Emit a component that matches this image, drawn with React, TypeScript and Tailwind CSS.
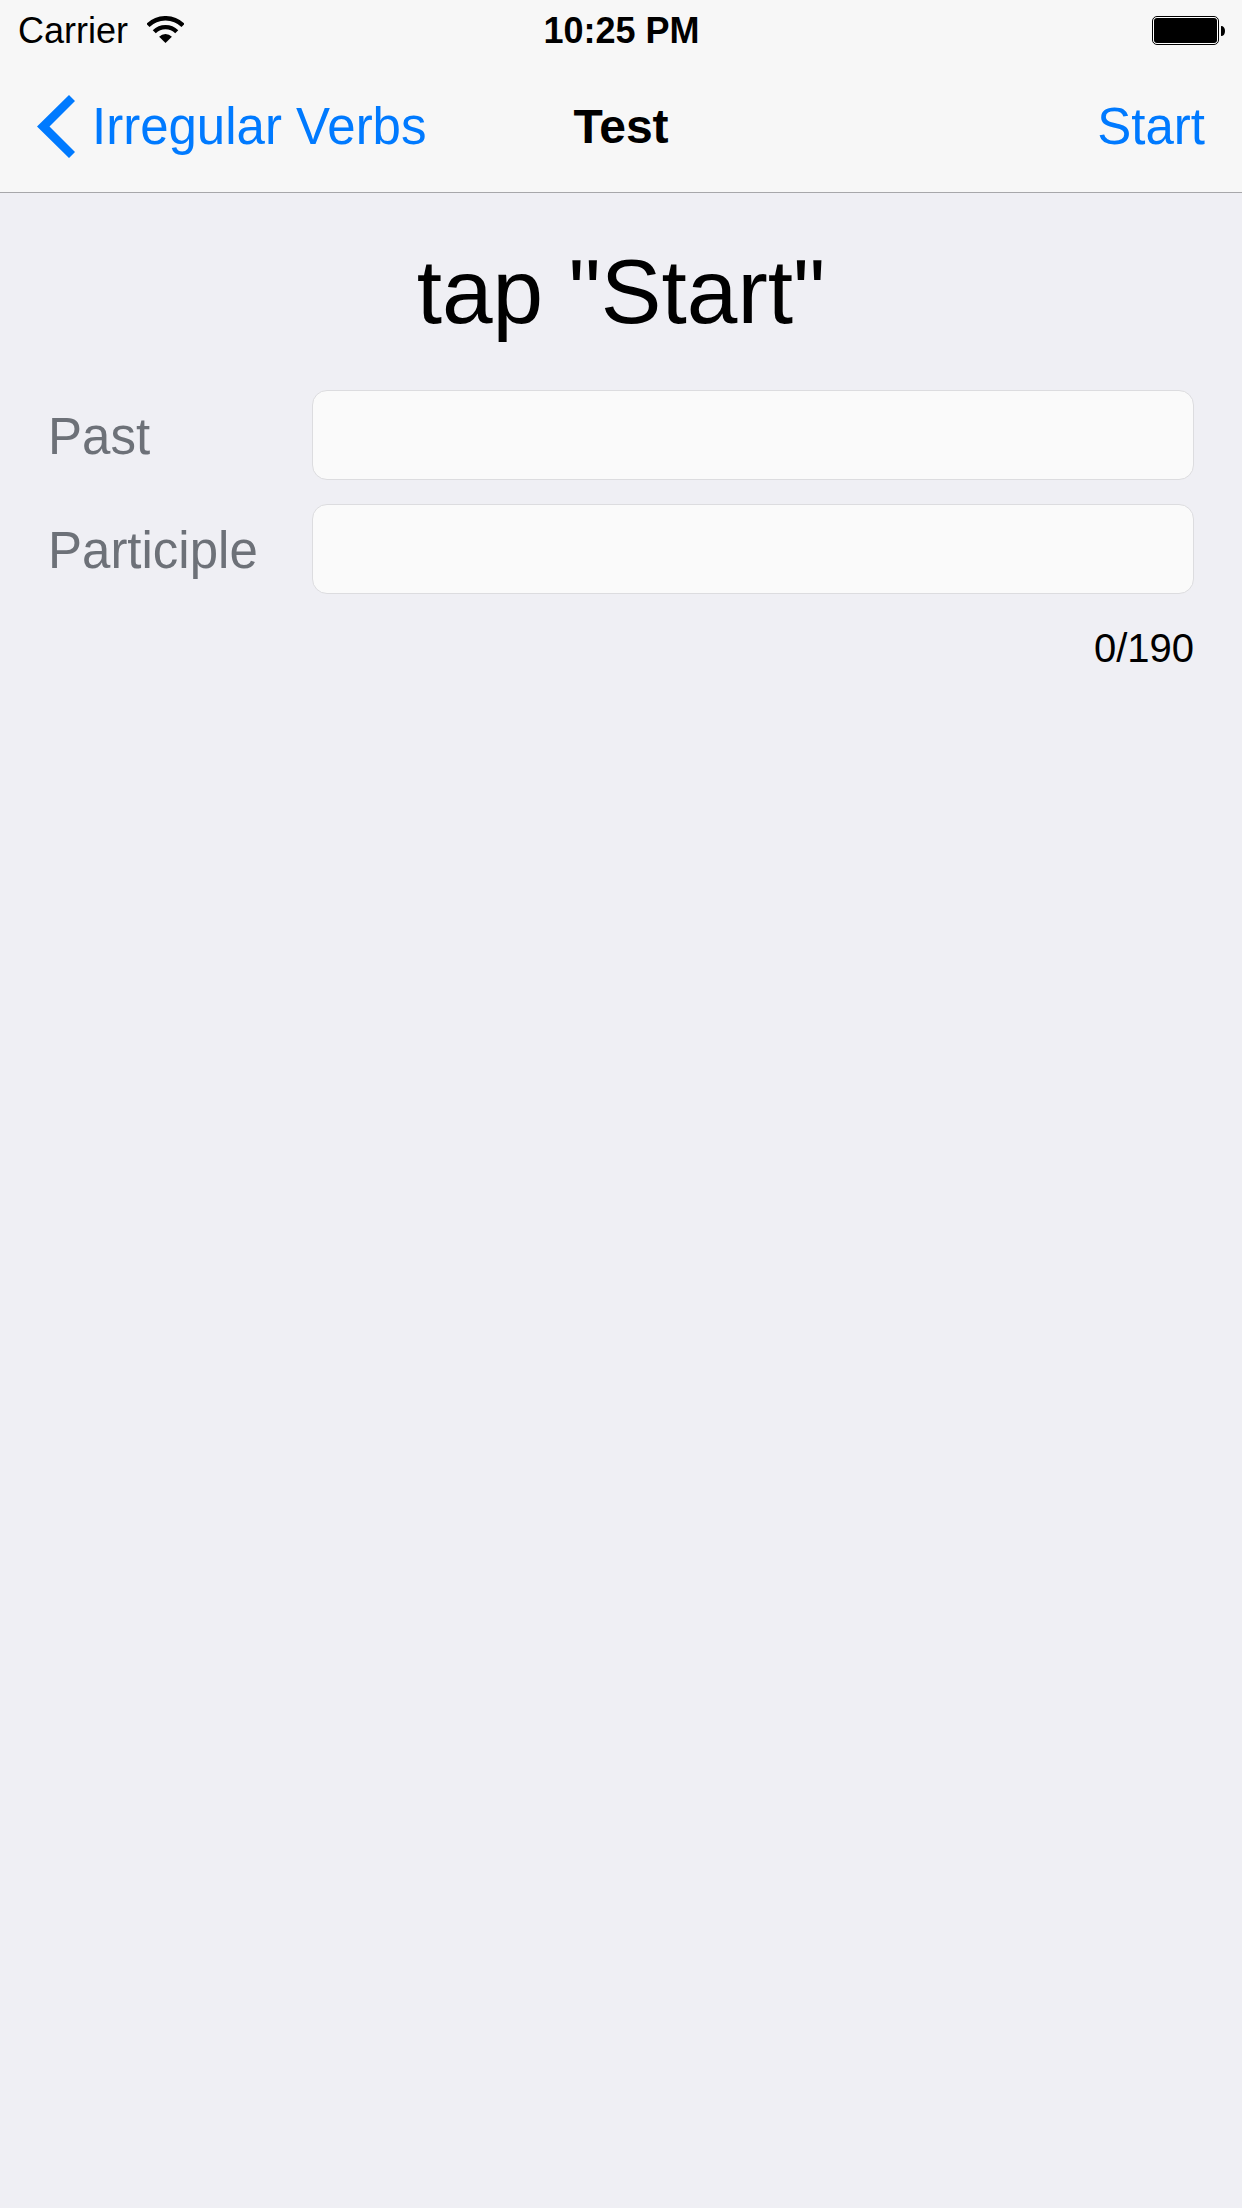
import React, { useState } from "react";

const WifiIcon = () => (
  <svg width="37" height="30" viewBox="0 0 37 30" fill="none" aria-hidden="true">
    <path d="M0.96 9.46A24.8 24.8 0 0 1 36.04 9.46" stroke="#000" strokeWidth="4.4" />
    <path d="M7.26 15.76A15.9 15.9 0 0 1 29.74 15.76" stroke="#000" strokeWidth="4.3" />
    <path d="M18.5 27L12.14 20.64A9 9 0 0 1 24.86 20.64Z" fill="#000" />
  </svg>
);

const BatteryIcon = () => (
  <svg width="73" height="30" viewBox="0 0 73 30" fill="none" aria-hidden="true">
    <rect x="0.5" y="0.5" width="66" height="28" rx="4.5" fill="#fff" stroke="#000" />
    <rect x="2" y="2" width="63" height="25" rx="3" fill="#000" />
    <path d="M69 10C71.6 10 73 12 73 15C73 18 71.6 20 69 20Z" fill="#000" />
  </svg>
);

const BackIcon = () => (
  <svg width="38" height="64" viewBox="0 0 38 64" aria-hidden="true">
    <path d="M32 0L38 6L12.5 31.5L38 57L32 63L0 31.5Z" fill="#007aff" />
  </svg>
);

interface FieldProps {
  id: string;
  label: string;
}

function Field({ id, label }: FieldProps) {
  const [value, setValue] = useState("");

  return (
    <div className="flex items-center">
      <label htmlFor={id} className="w-[264px] shrink-0 pt-1 text-[51px] leading-[60px] text-[#6d7178]">
        {label}
      </label>
      <input
        id={id}
        type="text"
        value={value}
        onChange={(e) => setValue(e.target.value)}
        className="h-[90px] min-w-0 flex-1 rounded-[15px] border border-[#dcdcdf] bg-[#fafafa] px-5 text-[42px] outline-none"
      />
    </div>
  );
}

function App() {
  return (
    <div className="min-h-screen w-full bg-[#efeff4] font-['Liberation_Sans',Arial,sans-serif] text-black">
      <header className="border-b border-[#a7a7aa] bg-[#f7f7f7]">
        <div className="grid h-[62px] grid-cols-[1fr_auto_1fr] items-center pl-[18px] pr-[17px] text-[36px]">
          <div className="flex items-center gap-[19px]">
            <span>Carrier</span>
            <WifiIcon />
          </div>
          <span className="font-bold">10:25 PM</span>
          <div className="flex justify-end">
            <BatteryIcon />
          </div>
        </div>
        <nav className="grid h-[130px] grid-cols-[1fr_auto_1fr] items-center px-[37px] text-[51px] leading-[60px]">
          <a href="#" className="flex items-center gap-[17px] text-[#007aff]">
            <BackIcon />
            Irregular Verbs
          </a>
          <h1 className="text-[48px] font-bold">Test</h1>
          <button type="button" className="justify-self-end text-[#007aff]">
            Start
          </button>
        </nav>
      </header>
      <main className="px-12 pt-[45px]">
        <h2 className="text-center text-[91px] leading-[108px]">tap "Start"</h2>
        <div className="flex flex-col gap-6 pt-11">
          <Field id="past" label="Past" />
          <Field id="participle" label="Participle" />
        </div>
        <p className="pt-[30px] text-right text-[40px] leading-[48px]">0/190</p>
      </main>
    </div>
  );
}

export default App;
